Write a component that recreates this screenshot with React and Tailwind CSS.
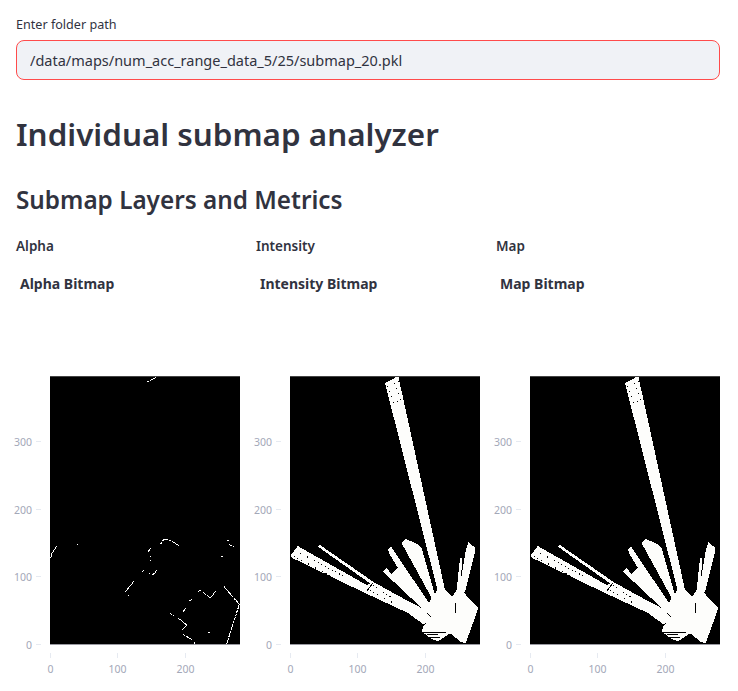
import React from 'react';

const SANS = "font-['Noto_Sans',sans-serif]";

// Fan shapes use the screen coordinates of the Intensity plot (viewBox starts at 290,376)
const fanPolys = [
  // top beam
  '385,383 398.3,376 445,590 437.5,590',
  // left beam, first part
  '297.7,546 291,555 291.7,557.7 365,593 408,613 423,624 432,622 427,611 395,594 373,581.7 366.7,585',
  // thin line from the left
  '317,546 320,545 373,581.7 370,583.3',
  // middle-left beam with notch
  '388,550 391,546.7 396.7,555 429,603 427,613 383,571.7 386.7,568.3 391.7,574.3 397.7,567.7 390,555',
  // middle beam
  '401.7,543.3 406,539 418.3,544.3 421.7,548.3 435,595 431.7,598',
  // thin beam on the right
  '460,558.3 462.3,557.7 460,595 456,596',
  // right beam
  '466,549 468.3,542.3 475,547.7 475,552 465,592 458,598',
  // hub
  '431.7,597.7 437.5,590 445,590 452.3,596.7 456.7,590 463,591.7 478.3,608.3 465.7,643.3 461,642 450,633.3 438.3,641 433.3,640 421.7,631.7 423,626.7 428,622 423,612 429,603',
];

const fanCuts = [
  'M455 603V613',
  'M427 613L431 617',
  'M422 632L446 633',
  'M427 635L438 634',
  'M429 638L440 637',
  'M367 591L373 583',
];

const fanSpecks = [
  'M387 387L399 381',
  'M389 392L401 386',
  'M391 397L402 392',
  'M393 403L403 399',
  'M294 556L330 576',
  'M300 553L345 577',
  'M330 578L352 590',
  'M373 585L392 598',
  'M370 590L395 604',
];

// Alpha outlines use a 570x804 box, 3 units per screen pixel
const alphaLines = [
  '290,19 327,0',
  '2,547 5,532 20,510',
  '8,542 10,542',
  '83,505 83,508',
  '225,649 252,615',
  '235,656 235,660',
  '277,587 283,580',
  '298,592 300,592',
  '308,597 323,580',
  '295,527 301,517',
  '301,540 301,542',
  '302,552 301,554',
  '332,504 342,489 352,489 388,509',
  '512,541 518,541',
  '532,493 536,493',
  '538,506 553,514',
  '443,646 452,643',
  '460,650 480,664 486,662 496,646',
  '522,632 568,685 540,772 530,804',
  '418,674 428,670',
  '400,707 406,697',
  '360,712 370,720',
  '385,727 410,747 395,764',
  '398,775 425,790',
  '432,797 432,804',
  '474,769 480,769',
];

const yTicks = [
  { label: '0', y: 268.5 },
  { label: '100', y: 200.5 },
  { label: '200', y: 133.5 },
  { label: '300', y: 65.5 },
];

const xTicks = [
  { label: '0', x: 0.5 },
  { label: '100', x: 67.5 },
  { label: '200', x: 135.5 },
];

function Chart({ kind }) {
  return (
    <svg
      width="224"
      height="316"
      viewBox="-34 -1 224 316"
      className="block overflow-visible"
      style={{ fontFamily: "'Noto Sans', sans-serif" }}
    >
      <rect x="0" y="0" width="190" height="268" fill="#000000" />
      {kind === 'outline' ? (
        <svg x="0" y="0" width="190" height="268" viewBox="0 0 570 804" shapeRendering="crispEdges">
          {alphaLines.map((pts) => (
            <polyline key={pts} points={pts} fill="none" stroke="#ffffff" strokeWidth="3" strokeDasharray="9 2" />
          ))}
        </svg>
      ) : (
        <svg x="0" y="0" width="190" height="268" viewBox="290 376 190 268" shapeRendering="crispEdges">
          {fanPolys.map((pts) => (
            <polygon key={pts} points={pts} fill="#fdfdfb" />
          ))}
          {fanCuts.map((d) => (
            <path key={d} d={d} stroke="#000000" strokeWidth="1" fill="none" />
          ))}
          {fanSpecks.map((d) => (
            <path key={d} d={d} stroke="#000000" strokeWidth="1" strokeDasharray="1 3" fill="none" />
          ))}
        </svg>
      )}
      <path d="M0 0.5H190" stroke="#444444" strokeWidth="1" />
      <path d="M0 268.5H190" stroke="#9a9aa2" strokeWidth="1" />
      {yTicks.map((t) => (
        <g key={t.label}>
          <path d={`M-14 ${t.y}H-9`} stroke="#e6eaf1" strokeWidth="1" />
          <text x="-18" y={t.y + 4} textAnchor="end" fontSize="10.5" fill="#a3a8b8">{t.label}</text>
        </g>
      ))}
      {xTicks.map((t) => (
        <g key={t.label}>
          <path d={`M${t.x} 277V282`} stroke="#e6eaf1" strokeWidth="1" />
          <text x={t.x} y="297" textAnchor="middle" fontSize="10.5" fill="#a3a8b8">{t.label}</text>
        </g>
      ))}
    </svg>
  );
}

const columns = [
  { name: 'Alpha', title: 'Alpha Bitmap', kind: 'outline' },
  { name: 'Intensity', title: 'Intensity Bitmap', kind: 'fan' },
  { name: 'Map', title: 'Map Bitmap', kind: 'fan' },
];

export default function App() {
  return (
    <div className={`h-[691px] overflow-hidden bg-white px-4 pt-[17px] text-[#31333f] ${SANS}`}>
      <label className="block h-[23px] text-[12.6px] leading-4">Enter folder path</label>
      <input
        readOnly
        value="/data/maps/num_acc_range_data_5/25/submap_20.pkl"
        className="block h-10 w-[704px] rounded-lg border border-[#ff4b4b] bg-[#f0f2f6] px-[13px] text-[14.5px] text-[#31333f] outline-none"
      />
      <h1 className="mt-[32px] text-[31.4px] leading-[44px] font-semibold">Individual submap analyzer</h1>
      <h2 className="mt-[28px] text-[24.3px] leading-8 font-semibold">Submap Layers and Metrics</h2>
      <div className="mt-[20px] grid w-[704px] grid-cols-3 gap-4">
        {columns.map((col) => (
          <div key={col.name}>
            <div className="text-[13.5px] leading-5 font-semibold">{col.name}</div>
            <div className="mt-[18px] pl-1 text-[14px] leading-5 font-bold">{col.title}</div>
            <div className="mt-[81px]">
              <Chart kind={col.kind} />
            </div>
          </div>
        ))}
      </div>
    </div>
  );
}
